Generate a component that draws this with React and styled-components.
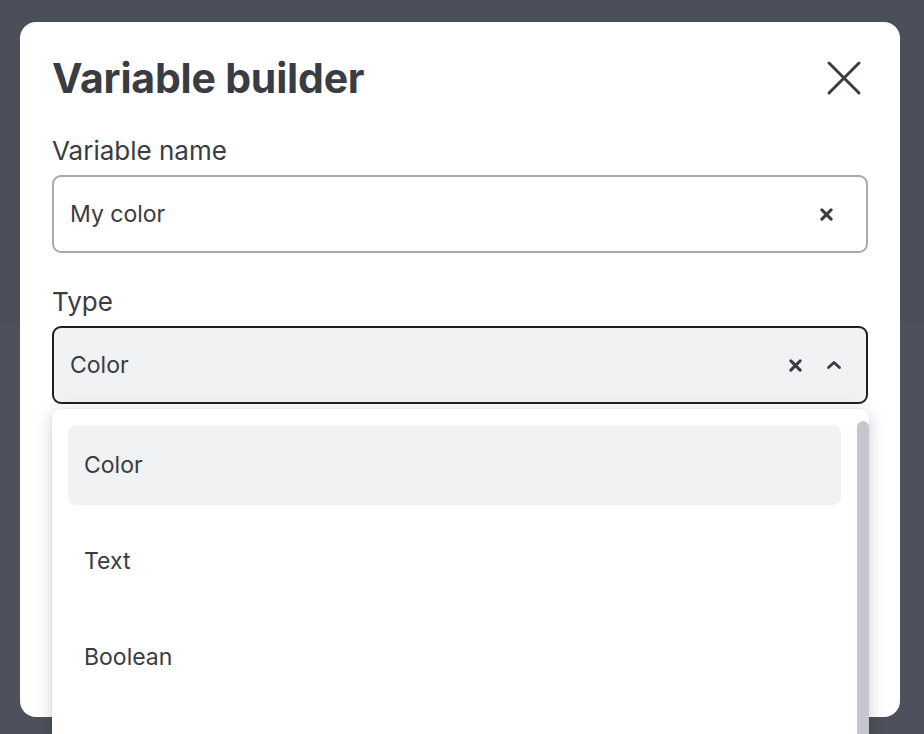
import React from "react";
import styled, { createGlobalStyle } from "styled-components";

const Global = createGlobalStyle`
  html, body { margin: 0; padding: 0; }
  body {
    width: 924px;
    height: 734px;
    overflow: hidden;
    background: linear-gradient(#4a4f59 0, #4a4f59 325px, #4c515b 325px);
    font-family: Inter, "Noto Sans", sans-serif;
    color: #3a3c43;
  }
`;

const Page = styled.div`
  padding: 22px 24px 0 20px;
  height: 734px;
  box-sizing: border-box;
`;

const Modal = styled.div`
  position: relative;
  background: #fff;
  border-radius: 16px;
  height: 695px;
  padding: 28px 32px 0 32px;
  box-sizing: border-box;
`;

const Header = styled.div`
  display: flex;
  align-items: center;
  justify-content: space-between;
  height: 56px;
`;

const Title = styled.h1`
  margin: 0;
  font-size: 41px;
  font-weight: 700;
  letter-spacing: -0.2px;
  color: #3a3c43;
`;

const CloseButton = styled.button`
  border: none;
  background: none;
  padding: 0;
  margin-right: 4px;
  width: 40px;
  height: 40px;
  display: flex;
  align-items: center;
  justify-content: center;
  color: #3a3c43;
`;

const Field = styled.div`
  display: flex;
  flex-direction: column;
  margin-top: ${(p) => p.$top}px;
`;

const Label = styled.label`
  font-size: 26px;
  line-height: 34px;
  color: #3a3c43;
  margin-bottom: 7px;
`;

const Box = styled.div`
  position: relative;
  height: 78px;
  flex-shrink: 0;
  box-sizing: border-box;
  border: 2px solid ${(p) => (p.$active ? "#1e1f22" : "#a7a8b0")};
  background: ${(p) => (p.$active ? "#f1f2f4" : "#fff")};
  border-radius: 9px;
  display: flex;
  align-items: center;
  padding: 0 ${(p) => (p.$active ? 24 : 33)}px 0 16px;
  font-size: 23px;
  color: #3a3c43;
`;

const Value = styled.span`
  flex: 1;
`;

const Icons = styled.div`
  display: flex;
  align-items: center;
  gap: 24px;
  color: #3a3c43;
`;

const Listbox = styled.div`
  position: absolute;
  left: -2px;
  right: -3px;
  top: 81px;
  height: 340px;
  background: #fff;
  border-radius: 8px;
  box-shadow: 0 4px 18px rgba(0, 0, 0, 0.18), 0 0 2px rgba(0, 0, 0, 0.08);
  padding: 16px 28px 0 16px;
  box-sizing: border-box;
  display: flex;
  flex-direction: column;
  gap: 16px;
  z-index: 5;
`;

const Option = styled.div`
  height: 80px;
  border-radius: 8px;
  background: ${(p) => (p.$selected ? "#f1f2f4" : "transparent")};
  display: flex;
  align-items: center;
  padding-left: 16px;
  font-size: 23px;
  color: #3a3c43;
  flex-shrink: 0;
`;

const Scrollbar = styled.div`
  position: absolute;
  right: 0;
  top: 12px;
  width: 12px;
  bottom: 0;
  background: #c6c7cc;
  border-radius: 6px 6px 0 0;
`;

const XIcon = ({ size = 14, stroke = 3 }) => (
  <svg width={size} height={size} viewBox="0 0 14 14" fill="none">
    <path d="M2 2L12 12M12 2L2 12" stroke="currentColor" strokeWidth={stroke} strokeLinecap="round" />
  </svg>
);

const ChevronUp = () => (
  <svg width="16" height="10" viewBox="0 0 16 10" fill="none">
    <path d="M2.5 7.5L8 2.5L13.5 7.5" stroke="currentColor" strokeWidth="2.8" strokeLinecap="round" strokeLinejoin="round" />
  </svg>
);

const BigX = () => (
  <svg width="36" height="36" viewBox="0 0 36 36" fill="none">
    <path d="M3 3L33 33M33 3L3 33" stroke="currentColor" strokeWidth="3" strokeLinecap="round" />
  </svg>
);

export default function App() {
  return (
    <>
      <Global />
      <Page>
        <Modal>
          <Header>
            <Title>Variable builder</Title>
            <CloseButton aria-label="Close">
              <BigX />
            </CloseButton>
          </Header>
          <Field $top={28}>
            <Label>Variable name</Label>
            <Box>
              <Value>My color</Value>
              <Icons>
                <XIcon size={13} stroke={3.2} />
              </Icons>
            </Box>
          </Field>
          <Field $top={32}>
            <Label>Type</Label>
            <Box $active>
              <Value>Color</Value>
              <Icons>
                <XIcon size={13} stroke={3.2} />
                <ChevronUp />
              </Icons>
              <Listbox>
                <Option $selected>Color</Option>
                <Option>Text</Option>
                <Option>Boolean</Option>
                <Scrollbar />
              </Listbox>
            </Box>
          </Field>
        </Modal>
      </Page>
    </>
  );
}
